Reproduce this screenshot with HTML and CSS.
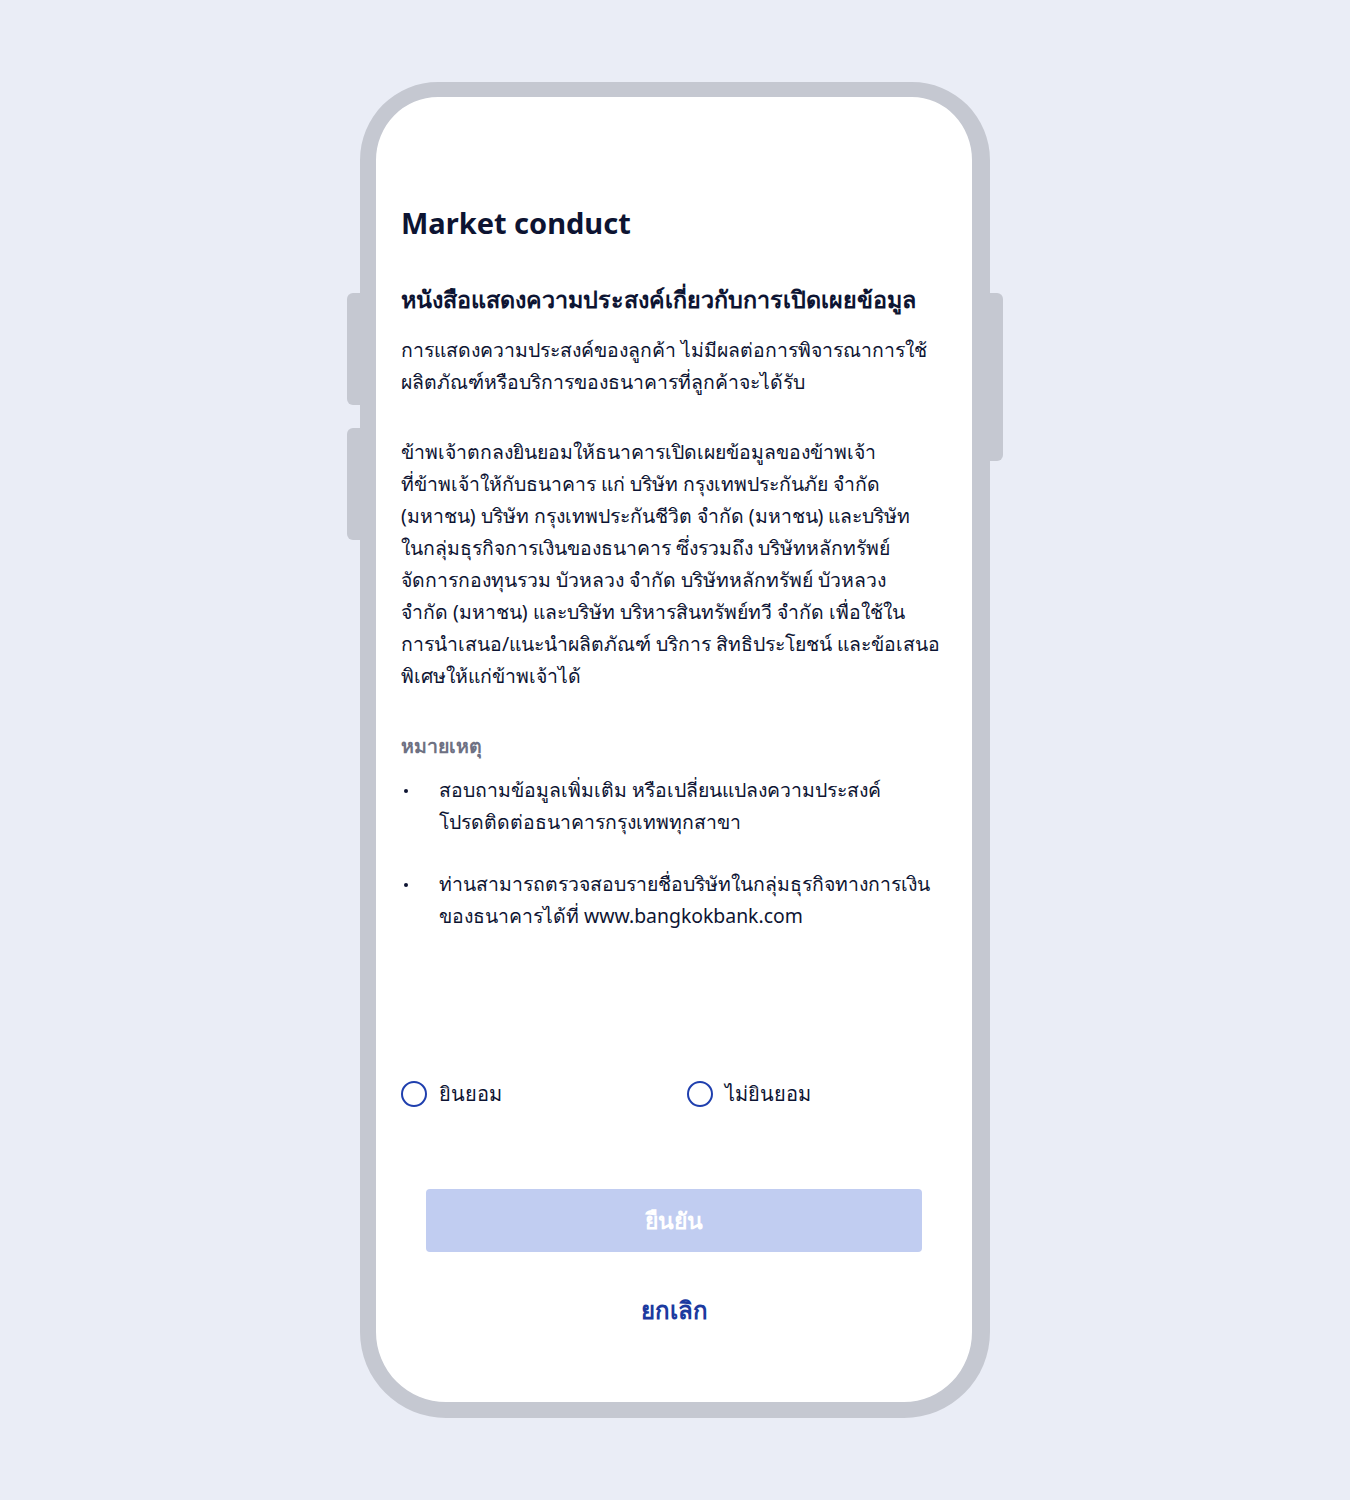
FILE: index.html
```html
<!DOCTYPE html>
<html lang="th">
<head>
    <meta charset="utf-8">
    <meta name="viewport" content="width=device-width, initial-scale=1.0">
    <title>Market conduct</title>
    <link rel="stylesheet" href="styles.css">
</head>
<body>
    <div class="phone">
        <span class="side-btn left-top"></span>
        <span class="side-btn left-bottom"></span>
        <span class="side-btn right"></span>

        <div class="screen">
            <h1>Market conduct</h1>

            <h2>หนังสือแสดงความประสงค์เกี่ยวกับการเปิดเผยข้อมูล</h2>
            <p class="intro">การแสดงความประสงค์ของลูกค้า ไม่มีผลต่อการพิจารณาการใช้<br>ผลิตภัณฑ์หรือบริการของธนาคารที่ลูกค้าจะได้รับ</p>

            <p class="consent">ข้าพเจ้าตกลงยินยอมให้ธนาคารเปิดเผยข้อมูลของข้าพเจ้า<br>ที่ข้าพเจ้าให้กับธนาคาร แก่ บริษัท กรุงเทพประกันภัย จำกัด<br>(มหาชน) บริษัท กรุงเทพประกันชีวิต จำกัด (มหาชน) และบริษัท<br>ในกลุ่มธุรกิจการเงินของธนาคาร ซึ่งรวมถึง บริษัทหลักทรัพย์<br>จัดการกองทุนรวม บัวหลวง จำกัด บริษัทหลักทรัพย์ บัวหลวง<br>จำกัด (มหาชน) และบริษัท บริหารสินทรัพย์ทวี จำกัด เพื่อใช้ใน<br>การนำเสนอ/แนะนำผลิตภัณฑ์ บริการ สิทธิประโยชน์ และข้อเสนอ<br>พิเศษให้แก่ข้าพเจ้าได้</p>

            <h3>หมายเหตุ</h3>
            <ul class="notes">
                <li>สอบถามข้อมูลเพิ่มเติม หรือเปลี่ยนแปลงความประสงค์<br>โปรดติดต่อธนาคารกรุงเทพทุกสาขา</li>
                <li>ท่านสามารถตรวจสอบรายชื่อบริษัทในกลุ่มธุรกิจทางการเงิน<br>ของธนาคารได้ที่ www.bangkokbank.com</li>
            </ul>

            <div class="choices">
                <label class="choice"><input type="radio" name="consent" value="yes"><span class="dot"></span>ยินยอม</label>
                <label class="choice"><input type="radio" name="consent" value="no"><span class="dot"></span>ไม่ยินยอม</label>
            </div>

            <button class="confirm" disabled>ยืนยัน</button>
            <a class="cancel" href="#">ยกเลิก</a>
        </div>
    </div>
</body>
</html>
```

FILE: styles.css
```css
body {
    font-family: 'Noto Sans', sans-serif;
    background: #eaedf6;
    color: #0d1432;
    margin: 0;
    padding: 82px 0 82px;
}

.phone {
    position: relative;
    width: 596px;
    height: 1305px;
    margin: 0 auto;
    border: 16px solid #c5c8d1;
    border-top-width: 15px;
    border-right-width: 18px;
    border-radius: 78px 78px 86px 86px;
    background: #ffffff;
}

.side-btn {
    position: absolute;
    width: 13px;
    background: #c5c8d1;
}

.left-top,
.left-bottom {
    left: -29px;
    border-radius: 6px 0 0 6px;
}

.left-top {
    top: 196px;
    height: 112px;
}

.left-bottom {
    top: 331px;
    height: 112px;
}

.right {
    right: -31px;
    top: 196px;
    height: 168px;
    border-radius: 0 6px 6px 0;
}

.screen {
    padding: 106px 25px 0;
}

h1 {
    font-size: 29px;
    font-weight: 700;
    line-height: 40px;
    margin: 0 0 40px;
}

h2 {
    font-size: 23.3px;
    font-weight: 700;
    line-height: 32px;
    margin: 0 0 19px;
    white-space: nowrap;
}

p {
    font-size: 19.4px;
    line-height: 32px;
    margin: 0;
    white-space: nowrap;
}

.intro {
    margin-bottom: 38px;
}

h3 {
    font-size: 19.5px;
    font-weight: 700;
    color: #6e7183;
    line-height: 28px;
    margin: 40px 0 14px;
}

.notes {
    list-style: none;
    margin: 0;
    padding: 0;
}

.notes li {
    position: relative;
    font-size: 19.4px;
    line-height: 32px;
    padding-left: 38px;
    margin-bottom: 30px;
    white-space: nowrap;
}

.notes li::before {
    content: '';
    position: absolute;
    left: 3px;
    top: 15px;
    width: 4px;
    height: 4px;
    border-radius: 50%;
    background: #0d1432;
}

.choices {
    display: grid;
    grid-template-columns: 286px 1fr;
    margin-top: 146px;
}

.choice {
    display: flex;
    align-items: center;
    gap: 12px;
    font-size: 20px;
    line-height: 32px;
    cursor: pointer;
}

.choice input {
    display: none;
}

.dot {
    width: 22px;
    height: 22px;
    border: 2px solid #1f3fae;
    border-radius: 50%;
}

.confirm {
    display: block;
    width: 496px;
    height: 63px;
    margin: 79px auto 0;
    border: none;
    border-radius: 4px;
    background: #c1cdf1;
    color: #ffffff;
    font-family: inherit;
    font-size: 23px;
    font-weight: 700;
}

.cancel {
    display: block;
    text-align: center;
    margin-top: 42px;
    font-size: 24px;
    font-weight: 700;
    line-height: 32px;
    color: #1c3a9f;
    text-decoration: none;
}
```
